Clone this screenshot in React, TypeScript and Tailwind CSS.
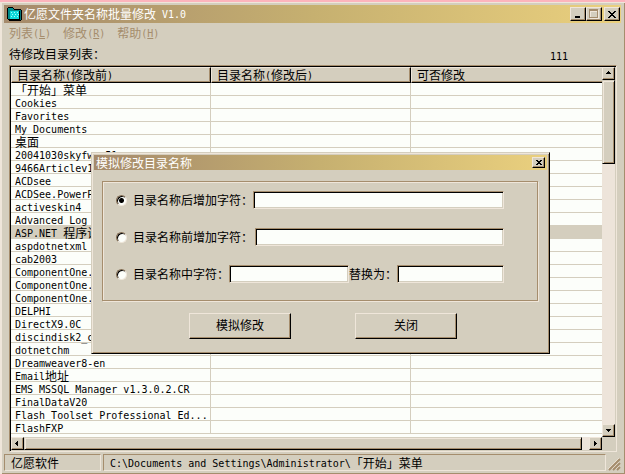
import { useState } from "react";
import type { ReactNode } from "react";

const RAISED =
  "border border-t-[#efe6da] border-l-[#efe6da] border-b-black border-r-black bg-[#d4cebe] shadow-[inset_-1px_-1px_0_#a58d6d]";
const THUMB =
  "border border-t-[#d4cebe] border-l-[#d4cebe] border-b-black border-r-black bg-[#d4cebe] shadow-[inset_1px_1px_0_#efe6da,inset_-1px_-1px_0_#a58d6d]";
const FIELD =
  "h-[18px] min-w-0 rounded-none border border-t-[#a58d6d] border-l-[#a58d6d] border-b-[#efe6da] border-r-[#efe6da] bg-[#fcfefa] px-1 shadow-[inset_1px_1px_0_#000,inset_-1px_-1px_0_#d4cebe] outline-none";
const PANEL =
  "flex h-[17px] items-center border border-t-[#a58d6d] border-l-[#a58d6d] border-b-[#efe6da] border-r-[#efe6da] pl-[6px]";
const TITLE =
  "flex items-center bg-linear-to-r from-[#a58a6b] via-[#c6b070] to-[#ead07e] text-white";

const folders = [
  "「开始」菜单",
  "Cookies",
  "Favorites",
  "My Documents",
  "桌面",
  "20041030skyfwq_51",
  "9466Articlev1.0",
  "ACDsee",
  "ACDSee.PowerPack",
  "activeskin4",
  "Advanced Log",
  "ASP.NET 程序设计",
  "aspdotnetxml",
  "cab2003",
  "ComponentOne.1",
  "ComponentOne.2",
  "ComponentOne.3",
  "DELPHI",
  "DirectX9.0C",
  "discindisk2_cn",
  "dotnetchm",
  "Dreamweaver8-en",
  "Email地址",
  "EMS MSSQL Manager v1.3.0.2.CR",
  "FinalDataV20",
  "Flash Toolset Professional Ed...",
  "FlashFXP",
];

const menus = [
  { label: "列表", key: "L" },
  { label: "修改", key: "R" },
  { label: "帮助", key: "H" },
];

// Latin runs use a narrower size so two letters fill one Chinese character
function Mixed({ text }: { text: string }) {
  const parts = text.split(/([\x20-\x7e]+)/).filter(Boolean);
  return (
    <span className="flex items-center whitespace-pre">
      {parts.map((part, i) =>
        /^[\x20-\x7e]/.test(part) ? (
          <Latin key={i}>{part}</Latin>
        ) : (
          <span key={i}>{part}</span>
        )
      )}
    </span>
  );
}

function Latin({ children }: { children: ReactNode }) {
  return (
    <span className="pt-[2px] font-['DejaVu_Sans_Mono','Liberation_Mono',monospace] text-[10px] leading-3">
      {children}
    </span>
  );
}

function FolderIcon() {
  return (
    <svg width="15" height="14" viewBox="0 0 15 14" shapeRendering="crispEdges" aria-hidden="true">
      <path d="M1 0h5v1h1v1h7v1h1v10h-1v1H2v-1H1v-1H0V1h1z" fill="#000" />
      <path d="M1 1h5v1h1v1h6v1H3v8H1z" fill="#008c8c" />
      <path d="M3 4h9v8H3z" fill="#10d8dc" />
      <path
        d="M4 5h1v1H4zM7 5h1v1H7zM10 5h1v1h-1zM5 7h1v1H5zM8 7h1v1H8zM11 7h1v1h-1zM4 9h1v1H4zM7 9h1v1H7zM10 9h1v1h-1z"
        fill="#9cffff"
      />
      <path d="M13 3h1v10h-1z" fill="#087478" />
    </svg>
  );
}

function Arrow({ direction }: { direction: "up" | "down" | "left" | "right" }) {
  const paths = {
    up: "M3 1h1v1h1v1h1v1H1V3h1V2h1z",
    down: "M1 2h5v1H5v1H4v1H3V4H2V3H1z",
    left: "M4 1v5H3V5H2V4H1V3h1V2h1V1z",
    right: "M2 1h1v1h1v1h1v1H4v1H3v1H2z",
  };
  return (
    <svg width="7" height="7" viewBox="0 0 7 7" shapeRendering="crispEdges" aria-hidden="true">
      <path d={paths[direction]} />
    </svg>
  );
}

function ScrollButton({ direction }: { direction: "up" | "down" | "left" | "right" }) {
  return (
    <button
      type="button"
      aria-label={`Scroll ${direction}`}
      className={`flex size-[13px] shrink-0 items-center justify-center ${RAISED}`}
    >
      <Arrow direction={direction} />
    </button>
  );
}

function CaptionButton({ label, children }: { label: string; children: ReactNode }) {
  return (
    <button
      type="button"
      aria-label={label}
      className={`flex h-[14px] w-4 items-center justify-center ${RAISED}`}
    >
      {children}
    </button>
  );
}

function FolderTable() {
  const [selected, setSelected] = useState(11);
  const headings = ["目录名称(修改前)", "目录名称(修改后)", "可否修改"];

  return (
    <table className="w-full table-fixed border-separate border-spacing-0">
      <colgroup>
        <col className="w-[200px]" />
        <col className="w-[200px]" />
        <col />
      </colgroup>
      <thead>
        <tr>
          {headings.map((heading) => (
            <th
              key={heading}
              className="h-4 border-t border-b border-l border-t-[#efe6da] border-b-black border-l-[#efe6da] bg-[#d4cebe] p-0 pl-[5px] text-left font-normal shadow-[inset_0_-1px_0_#a58d6d] not-last:border-r not-last:border-r-black not-last:shadow-[inset_-1px_-1px_0_#a58d6d]"
            >
              <div className="flex h-3 items-center">
                <Mixed text={heading} />
              </div>
            </th>
          ))}
        </tr>
      </thead>
      <tbody>
        {folders.map((name, i) => (
          <tr
            key={name}
            onClick={() => setSelected(i)}
            className={i === selected ? "bg-[#d4cebe]" : "bg-[#fcfefa]"}
          >
            <td className="h-[13px] border-r border-b border-[#d4cebe] p-0 pl-1">
              <div className="flex h-3 items-center pt-[2px]">
                <Mixed text={name} />
              </div>
            </td>
            <td className="border-r border-b border-[#d4cebe] p-0" />
            <td className="border-b border-[#d4cebe] p-0" />
          </tr>
        ))}
      </tbody>
    </table>
  );
}

function RenameDialog() {
  const [mode, setMode] = useState("suffix");

  const radio = (value: string, label: string) => (
    <label className="flex items-center gap-[6px] whitespace-nowrap">
      <input
        type="radio"
        name="mode"
        value={value}
        checked={mode === value}
        onChange={() => setMode(value)}
        className="size-[11px] appearance-none rounded-full border border-t-[#806a50] border-l-[#806a50] border-b-[#efe6da] border-r-[#efe6da] bg-[#fcfefa] shadow-[inset_1px_1px_0_#000] checked:bg-[radial-gradient(circle,#000_2px,#fcfefa_3px)]"
      />
      {label}
    </label>
  );

  return (
    <div
      role="dialog"
      aria-labelledby="dialog-title"
      className="absolute top-[150px] left-[91px] w-[459px] border border-t-[#d4cebe] border-l-[#d4cebe] border-r-black border-b-black bg-[#d4cebe] p-[2px] pb-[14px] shadow-[inset_1px_1px_0_#efe6da,inset_-1px_-1px_0_#a58d6d]"
    >
      <div className={`h-[15px] justify-between px-[2px] ${TITLE}`}>
        <h2 id="dialog-title">模拟修改目录名称</h2>
        <button
          type="button"
          aria-label="Close dialog"
          className={`flex h-[11px] w-[13px] items-center justify-center ${RAISED}`}
        >
          <svg width="6" height="5" viewBox="0 0 6 5" shapeRendering="crispEdges" aria-hidden="true">
            <path d="M0 0h2v1h2V0h2v1H5v1H4v1h1v1h1v1H4V4H2v1H0V4h1V3h1V2H1V1H0z" />
          </svg>
        </button>
      </div>

      <fieldset className="mr-[9px] ml-2 mt-[11px] flex min-w-0 flex-col gap-[19px] border border-[#a58d6d] pt-[9px] pr-[33px] pb-[17px] pl-[13px] shadow-[1px_1px_0_#efe6da,inset_1px_1px_0_#efe6da]">
        <div className="flex items-center">
          {radio("suffix", "目录名称后增加字符：")}
          <input aria-label="后增加字符" className={`flex-1 ${FIELD}`} />
        </div>
        <div className="flex items-center gap-[2px]">
          {radio("prefix", "目录名称前增加字符：")}
          <input aria-label="前增加字符" className={`flex-1 ${FIELD}`} />
        </div>
        <div className="flex items-center">
          {radio("replace", "目录名称中字符：")}
          <input aria-label="中字符" className={`w-[120px] ${FIELD}`} />
          <label htmlFor="replacement" className="whitespace-nowrap">
            替换为：
          </label>
          <input id="replacement" className={`flex-1 ${FIELD}`} />
        </div>
      </fieldset>

      <div className="mt-3 flex gap-16 pl-[95px]">
        <button type="button" className={`h-[26px] w-[102px] pb-[2px] ${RAISED}`}>
          模拟修改
        </button>
        <button type="button" className={`h-[26px] w-[102px] pb-[2px] ${RAISED}`}>
          关闭
        </button>
      </div>
    </div>
  );
}

export default function App() {
  return (
    <div className="relative flex min-h-screen flex-col border-t-2 border-t-[#fcb4bc] bg-[#d4cebe] px-1 pt-[3px] pb-[3px] font-['Noto_Sans_CJK_SC',sans-serif] text-xs leading-3 text-black shadow-[inset_0_1px_0_#efe6da,inset_2px_0_0_#efe6da,inset_-1px_-1px_0_#a58d6d]">
      {/* Title bar */}
      <header className={`h-[18px] gap-[2px] pr-px pl-[3px] ${TITLE}`}>
        <FolderIcon />
        <h1 className="flex-1">
          <Mixed text="亿愿文件夹名称批量修改 V1.0" />
        </h1>
        <div className="flex">
          <CaptionButton label="Minimize">
            <svg width="8" height="8" viewBox="0 0 8 8" aria-hidden="true">
              <path d="M1 6h5v2H1z" />
            </svg>
          </CaptionButton>
          <CaptionButton label="Maximize">
            <svg width="10" height="10" viewBox="0 0 10 10" fill="none" shapeRendering="crispEdges" aria-hidden="true">
              <path d="M1 1h9v9H1zM2 3v6h7V3z" fill="#efe6da" fillRule="evenodd" />
              <path d="M0 0h9v9H0zM1 2v6h7V2z" fill="#a58d6d" fillRule="evenodd" />
            </svg>
          </CaptionButton>
        </div>
        <CaptionButton label="Close">
          <svg width="8" height="7" viewBox="0 0 8 7" shapeRendering="crispEdges" aria-hidden="true">
            <path d="M0 0h2v1h1v1h2V1h1V0h2v1H7v1H6v1H5v1h1v1h1v1h1v1H6V6H5V5H3v1H2v1H0V6h1V5h1V4h1V3H2V2H1V1H0z" />
          </svg>
        </CaptionButton>
      </header>

      {/* Menu */}
      <nav className="flex h-[19px] items-center gap-3 px-[5px] text-[#a58d6d]">
        {menus.map((menu) => (
          <button key={menu.key} type="button" className="flex items-center">
            {menu.label}
            <Latin>
              (<u>{menu.key}</u>)
            </Latin>
          </button>
        ))}
      </nav>

      <div className="flex h-[23px] items-center justify-between pr-[53px] pl-[5px]">
        <span>待修改目录列表：</span>
        <span className="pt-1">
          <Latin>111</Latin>
        </span>
      </div>

      {/* Folder list */}
      <main className="mr-1 ml-[5px] grid flex-1 grid-cols-[1fr_13px] grid-rows-[1fr_13px] border border-t-[#a58d6d] border-l-[#a58d6d] border-r-[#efe6da] border-b-[#efe6da] bg-[#fcfefa] p-px shadow-[inset_1px_1px_0_#000,inset_-1px_-1px_0_#d4cebe]">
        <div className="min-w-0 pb-[3px]">
          <FolderTable />
        </div>
        <div className="flex flex-col bg-[#ede4da]">
          <ScrollButton direction="up" />
          <div className="flex-1">
            <div className={`h-[84px] ${THUMB}`} />
          </div>
          <ScrollButton direction="down" />
        </div>
        <div className="flex bg-[#ede4da]">
          <ScrollButton direction="left" />
          <div className={`mr-[7px] flex-1 ${THUMB}`} />
          <ScrollButton direction="right" />
        </div>
        <div className="bg-[#d4cebe]" />
      </main>

      {/* Status bar */}
      <footer className="mt-[2px] flex gap-[2px]">
        <div className={`w-[97px] ${PANEL}`}>亿愿软件</div>
        <div className={`flex-1 ${PANEL}`}>
          <Mixed text="C:\Documents and Settings\Administrator\「开始」菜单" />
        </div>
        <svg width="13" height="17" viewBox="0 0 13 17" fill="none" aria-hidden="true">
          <path d="M0 15L11 4M4 15L11 8M8 15L11 12" stroke="#efe6da" />
          <path d="M1 16L12 5M5 16L12 9M9 16L12 13" stroke="#a58d6d" strokeWidth="2" />
        </svg>
      </footer>

      <RenameDialog />
    </div>
  );
}
